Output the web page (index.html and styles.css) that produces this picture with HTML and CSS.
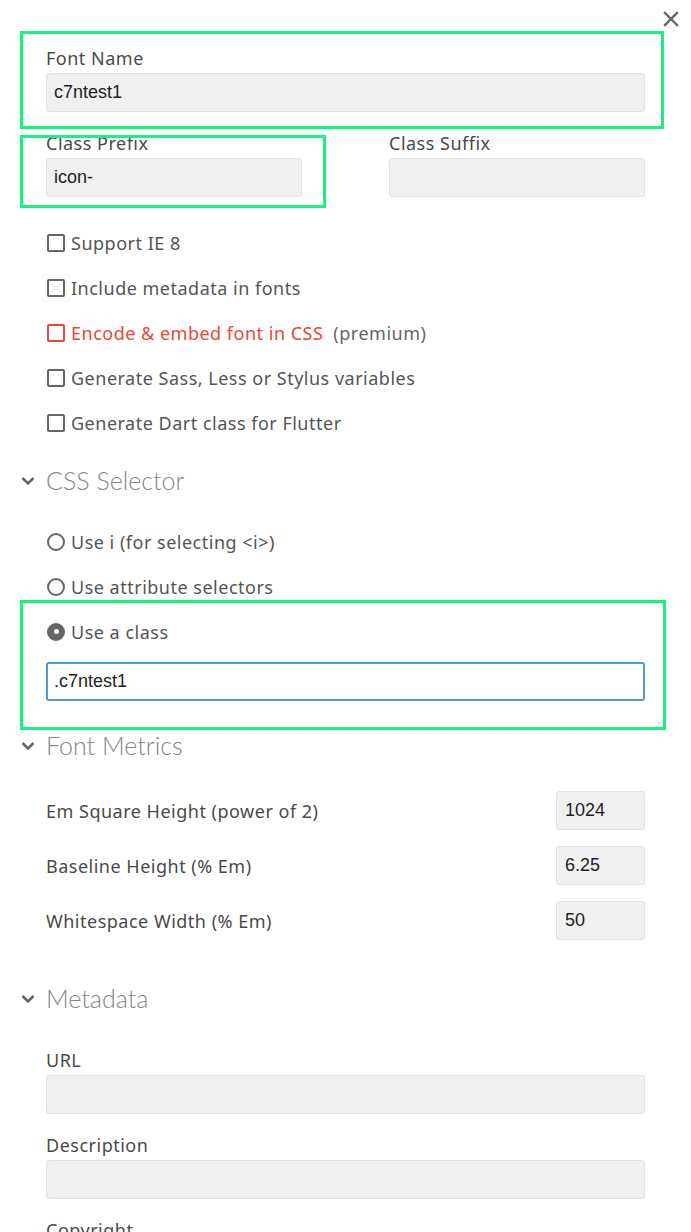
FILE: index.html
```html
<!DOCTYPE html>
<html>
<head>
<meta charset="utf-8">
<link rel="stylesheet" href="styles.css">
</head>
<body>
<div class="panel">
  <button class="close" aria-label="close">
    <svg width="16" height="16" viewBox="0 0 16 16"><path d="M2 2L14 14M14 2L2 14" stroke="#666" stroke-width="2.4" stroke-linecap="square"/></svg>
  </button>

  <div class="field">
    <label class="lbl">Font Name</label>
    <div class="inp">c7ntest1</div>
  </div>

  <div class="pair">
    <div class="field">
      <label class="lbl">Class Prefix</label>
      <div class="inp">icon-</div>
    </div>
    <div class="field">
      <label class="lbl">Class Suffix</label>
      <div class="inp"></div>
    </div>
  </div>

  <ul class="checks">
    <li class="opt"><span class="cb"></span>Support IE 8</li>
    <li class="opt"><span class="cb"></span>Include metadata in fonts</li>
    <li class="opt red"><span class="cb"></span>Encode &amp; embed font in CSS<span class="muted">(premium)</span></li>
    <li class="opt"><span class="cb"></span>Generate Sass, Less or Stylus variables</li>
    <li class="opt"><span class="cb"></span>Generate Dart class for Flutter</li>
  </ul>

  <h2 class="sect"><svg class="chev" width="14" height="10" viewBox="0 0 14 10"><path d="M1.5 2L7 7.5L12.5 2" fill="none" stroke="#666" stroke-width="2.6"/></svg>CSS Selector</h2>

  <ul class="radios">
    <li class="opt"><span class="rd"></span>Use i (for selecting &lt;i&gt;)</li>
    <li class="opt"><span class="rd"></span>Use attribute selectors</li>
    <li class="opt"><span class="rd on"></span>Use a class</li>
  </ul>
  <div class="inp focus">.c7ntest1</div>

  <h2 class="sect metrics-h"><svg class="chev" width="14" height="10" viewBox="0 0 14 10"><path d="M1.5 2L7 7.5L12.5 2" fill="none" stroke="#666" stroke-width="2.6"/></svg>Font Metrics</h2>

  <div class="metrics">
    <div class="mrow"><span class="mlbl">Em Square Height (power of 2)</span><div class="inp small">1024</div></div>
    <div class="mrow"><span class="mlbl">Baseline Height (% Em)</span><div class="inp small">6.25</div></div>
    <div class="mrow"><span class="mlbl">Whitespace Width (% Em)</span><div class="inp small">50</div></div>
  </div>

  <h2 class="sect meta-h"><svg class="chev" width="14" height="10" viewBox="0 0 14 10"><path d="M1.5 2L7 7.5L12.5 2" fill="none" stroke="#666" stroke-width="2.6"/></svg>Metadata</h2>

  <div class="field meta-first">
    <label class="lbl">URL</label>
    <div class="inp"></div>
  </div>
  <div class="field gap">
    <label class="lbl">Description</label>
    <div class="inp"></div>
  </div>
  <div class="field gap">
    <label class="lbl">Copyright</label>
    <div class="inp"></div>
  </div>

  <div class="hl hl1"></div>
  <div class="hl hl2"></div>
  <div class="hl hl3"></div>
</div>
</body>
</html>
```
FILE: styles.css
```css
* { box-sizing: border-box; }
html, body { margin: 0; padding: 0; background: #fff; overflow: hidden; }
body {
  font-family: "Noto Sans", "Lato", sans-serif;
  font-size: 18px;
  letter-spacing: 0.5px;
  color: #4a4a4a;
}
.panel {
  position: relative;
  width: 691px;
  height: 1232px;
  padding: 48px 46px 0 46px;
}
.close {
  position: absolute;
  top: 11px;
  left: 663px;
  width: 16px;
  height: 16px;
  padding: 0;
  border: 0;
  background: none;
  display: flex;
}
.field { display: flex; flex-direction: column; }
.lbl {
  display: block;
  line-height: 20px;
  height: 20px;
  margin-bottom: 5px;
  color: #4a4a4a;
}
.inp {
  height: 39px;
  background: #f0f0f0;
  border: 1px solid #e2e2e2;
  border-radius: 3px;
  font-family: "Liberation Sans", Arial, sans-serif;
  font-size: 18px;
  letter-spacing: 0;
  color: #1e1e1e;
  line-height: 37px;
  padding: 0 7px;
}
.inp.focus {
  margin-top: 8px;
  background: #fff;
  border: 2px solid #4d9bdb;
  line-height: 35px;
  padding: 0 6px;
}
.pair {
  margin-top: 21px;
  display: grid;
  grid-template-columns: 256px 256px;
  column-gap: 87px;
}
.checks, .radios { list-style: none; margin: 0; padding: 0; }
.checks { margin-top: 23px; }
.opt {
  height: 45px;
  display: flex;
  align-items: center;
  color: #555;
  white-space: pre;
}
.cb {
  width: 18px;
  height: 18px;
  border: 2px solid #666;
  border-radius: 2px;
  margin: 0 6px 0 1px;
  flex: none;
}
.red { color: #e8473b; }
.red .cb { border-color: #e8473b; }
.muted { color: #666; margin-left: 10px; }
.sect {
  margin: 20px 0 0 -25px;
  height: 30px;
  line-height: 30px;
  font-family: "Lato", sans-serif;
  font-size: 25px;
  font-weight: 300;
  letter-spacing: 0;
  color: #858585;
  display: flex;
  align-items: center;
}
.chev { margin: 2px 11px 0 0; flex: none; }
.radios { margin-top: 24px; }
.rd {
  width: 18px;
  height: 18px;
  border: 2px solid #666;
  border-radius: 50%;
  margin: 0 6px 0 1px;
  flex: none;
  position: relative;
}
.rd.on { background: #666; }
.rd.on::after {
  content: "";
  position: absolute;
  left: 4.5px; top: 4.5px;
  width: 5px; height: 5px;
  border-radius: 50%;
  background: #fff;
}
.metrics-h { margin-top: 29px; }
.metrics { margin-top: 31px; display: flex; flex-direction: column; gap: 16px; }
.mrow { display: flex; justify-content: space-between; align-items: center; height: 39px; }
.inp.small { width: 89px; padding: 0 8px; }
.meta-h { margin-top: 43px; }
.meta-first { margin-top: 37px; }
.gap { margin-top: 21px; }

.hl {
  position: absolute;
  border: 3px solid #14f57d;
  pointer-events: none;
}
.hl1 { left: 20px; top: 31px; width: 644px; height: 98px; }
.hl2 { left: 20px; top: 135px; width: 306px; height: 73px; }
.hl3 { left: 20px; top: 600px; width: 646px; height: 130px; }
```
